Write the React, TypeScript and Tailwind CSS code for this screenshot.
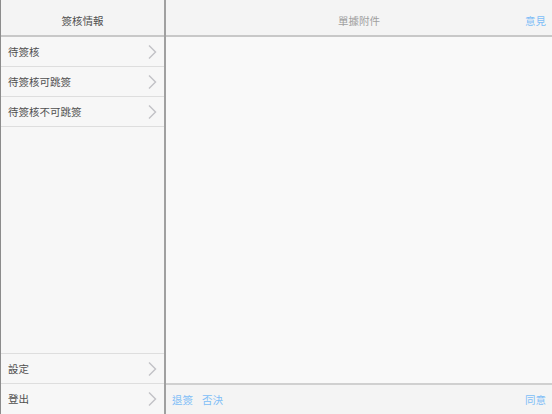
import React from 'react';

const font = { fontFamily: '"Noto Sans CJK TC", "Noto Sans", sans-serif' };

function Chevron() {
  return (
    <svg width="10" height="16" viewBox="0 0 10 16" className="shrink-0">
      <path d="M2 1.5 L8.5 8 L2 14.5" fill="none" stroke="#c2c2c6" strokeWidth="1.4" />
    </svg>
  );
}

function Row({ label, last }: { label: string; last?: boolean }) {
  return (
    <div
      className={`h-[30px] flex items-center justify-between pl-[7px] pr-[7px] border-b border-[#dedede] ${last ? 'border-b-0' : ''}`}
    >
      <span className="text-[10.5px] text-[#505050]">{label}</span>
      <Chevron />
    </div>
  );
}

export default function App() {
  return (
    <div className="w-[552px] h-[414px] flex bg-[#f9f9f9] overflow-hidden" style={font}>
      {/* Sidebar */}
      <div className="w-[166px] h-full flex flex-col bg-[#f7f7f7] border-l border-[#8c8c8c] border-r-2 border-r-[#a0a0a0]">
        <div className="h-[37px] shrink-0 flex items-end justify-center pb-[7px] bg-[#f4f4f4] border-b-2 border-[#c8c8c8]">
          <span className="text-[10.5px] leading-[15px] text-[#505050]">簽核情報</span>
        </div>
        <Row label="待簽核" />
        <Row label="待簽核可跳簽" />
        <Row label="待簽核不可跳簽" />
        <div className="flex-1" />
        <div className="border-t border-[#dedede]">
          <Row label="設定" />
          <Row label="登出" last />
        </div>
      </div>

      {/* Detail */}
      <div className="flex-1 h-full flex flex-col">
        <div className="h-[37px] shrink-0 flex items-end justify-between pb-[7px] bg-[#f4f4f4] border-b-2 border-[#c8c8c8] px-[6px]">
          <span className="w-[21px]" />
          <span className="text-[10.5px] leading-[15px] text-[#a0a0a0]">單據附件</span>
          <span className="w-[21px] text-[10.5px] leading-[15px] text-[#80bef7]">意見</span>
        </div>
        <div className="flex-1 bg-[#f9f9f9]" />
        <div className="h-[31px] shrink-0 flex items-center justify-between bg-[#f4f4f4] border-t-2 border-[#d0d0d0] pl-[6px] pr-[6px]">
          <div className="flex items-center gap-[9px]">
            <span className="text-[10.5px] text-[#80bef7]">退簽</span>
            <span className="text-[10.5px] text-[#80bef7]">否決</span>
          </div>
          <span className="text-[10.5px] text-[#80bef7]">同意</span>
        </div>
      </div>
    </div>
  );
}
